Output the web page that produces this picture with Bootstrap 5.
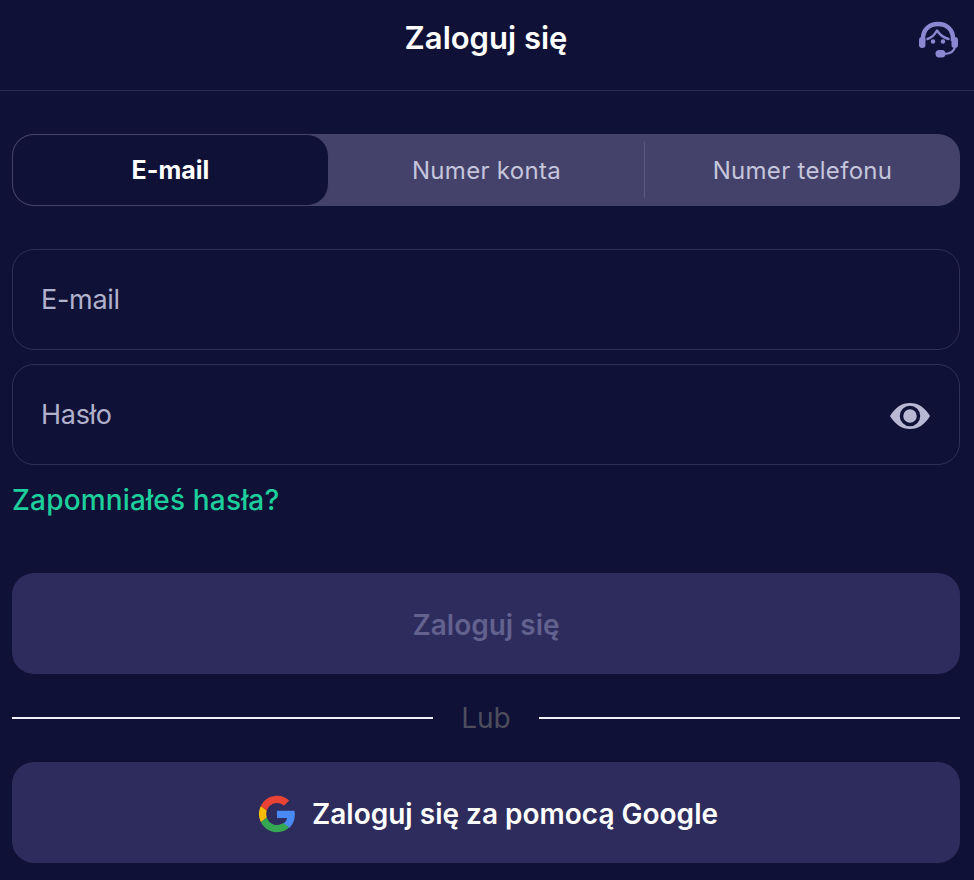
<!DOCTYPE html>
<html lang="pl">
<head>
    <meta charset="UTF-8">
    <meta name="viewport" content="width=device-width, initial-scale=1.0">
    <title>Zaloguj się</title>
    <link href="https://cdn.jsdelivr.net/npm/bootstrap@5.3.0/dist/css/bootstrap.min.css" rel="stylesheet">
    <style>
        body {
            font-family: "Inter", "Liberation Sans", sans-serif;
            background: #101136;
            color: #fff;
        }

        .top-bar {
            height: 91px;
            border-bottom: 1px solid #2b2c52;
            padding: 0 14px 14px 12px;
        }

        .top-title {
            font-size: 31px;
            font-weight: 600;
        }

        .support-btn {
            right: 14px;
            top: 20px;
            line-height: 0;
        }

        .page-body {
            padding: 43px 14px 0 12px;
        }

        .login-tabs {
            height: 72px;
            background: #44426b;
            border-radius: 22px;
        }

        .login-tab {
            flex: 1 1 0;
            padding-top: 2px;
            font-size: 24px;
            letter-spacing: .3px;
            color: #c5c5dc;
        }

        .login-tab.is-active {
            background: #101136;
            border: 1px solid #44426b;
            border-radius: 22px;
            color: #fff;
            font-size: 25px;
            font-weight: 700;
            letter-spacing: 0;
        }

        .tab-sep {
            width: 1px;
            height: 56px;
            background: #5a5980;
        }

        .field-box {
            height: 101px;
            border: 1px solid #2f3055;
            border-radius: 22px;
            padding: 2px 29px 0 28px;
            font-size: 27px;
            letter-spacing: -.3px;
            color: #b0b1cd;
        }

        .first-field {
            margin-top: -5px;
            margin-bottom: 14px;
        }

        .forgot-link {
            font-size: 28px;
            font-weight: 500;
            letter-spacing: .17px;
            color: #1ccf9c;
            line-height: 34px;
            margin-top: 18px;
            margin-bottom: 56px;
        }

        .big-btn {
            height: 101px;
            padding-top: 4px;
            border: 0;
            border-radius: 22px;
            background: #2e2c5c;
            font-size: 28px;
            font-weight: 600;
            color: #fff;
        }

        .big-btn:disabled {
            color: #63618e;
            opacity: 1;
        }

        .google-btn {
            padding: 2px 0 0 4px;
        }

        .or-row {
            height: 88px;
            font-size: 28px;
            color: #4d4d5e;
            gap: 28px;
        }

        .or-line {
            height: 2px;
            background: #f2f2f8;
        }
    </style>
</head>
<body>
    <header class="top-bar position-relative d-flex align-items-center justify-content-center">
        <div class="top-title">Zaloguj się</div>
        <a href="#" class="support-btn position-absolute">
            <svg width="42" height="40" viewBox="0 0 42 40" fill="none">
                <path d="M5 21V18.500C5 9.500 11.500 4 20 4S35 9.500 35 18.500V21" stroke="#8b88d2" stroke-width="4.500"/>
                <path d="M9.500 19C13 18 16.500 15 19 10.500C22 15 26.500 18 30.500 19" stroke="#8b88d2" stroke-width="2.500" stroke-linecap="round" stroke-linejoin="round"/>
                <rect x="1" y="17" width="6.500" height="11" rx="3.200" fill="#8b88d2"/>
                <rect x="33.500" y="17" width="6.500" height="11" rx="3.200" fill="#8b88d2"/>
                <circle cx="15" cy="21.500" r="2.200" fill="#8b88d2"/>
                <circle cx="25" cy="21.500" r="2.200" fill="#8b88d2"/>
                <path d="M37 27C36 31.500 33 33.500 27 34" stroke="#8b88d2" stroke-width="2.200"/>
                <rect x="17.500" y="30" width="10" height="7.500" rx="3.700" fill="#8b88d2"/>
            </svg>
        </a>
    </header>

    <main class="page-body">
        <div class="login-tabs d-flex align-items-center mb-5">
            <div class="login-tab is-active h-100 d-flex align-items-center justify-content-center">E-mail</div>
            <div class="login-tab d-flex align-items-center justify-content-center">Numer konta</div>
            <div class="tab-sep"></div>
            <div class="login-tab d-flex align-items-center justify-content-center">Numer telefonu</div>
        </div>

        <div class="field-box first-field d-flex align-items-center">E-mail</div>
        <div class="field-box d-flex align-items-center justify-content-between">
            <span>Hasło</span>
            <svg width="40" height="26" viewBox="0 0 40 26">
                <path d="M0 13C5 4.500 12 0 20 0S35 4.500 40 13C35 21.500 28 26 20 26S5 21.500 0 13Z" fill="#b9b8d4"/>
                <circle cx="20" cy="13" r="8.500" fill="none" stroke="#101136" stroke-width="3.500"/>
            </svg>
        </div>
        <div class="forgot-link">Zapomniałeś hasła?</div>

        <button class="big-btn w-100 d-block" disabled>Zaloguj się</button>

        <div class="or-row d-flex align-items-center">
            <div class="or-line flex-grow-1"></div>
            <span>Lub</span>
            <div class="or-line flex-grow-1"></div>
        </div>

        <button class="big-btn google-btn w-100 d-flex align-items-center justify-content-center gap-3">
            <svg width="38" height="38" viewBox="0 0 48 48">
                <path fill="#4a8af4" d="M46.500 24.500c0-1.600-.1-3.100-.4-4.500H24v9h12.700c-.6 2.900-2.200 5.400-4.700 7l7.300 5.700c4.300-4 7.200-9.800 7.200-17.200z"/>
                <path fill="#34a853" d="M24 47c6.200 0 11.400-2 15.300-5.800L32 35.500c-2 1.400-4.700 2.300-8 2.300-6 0-11.100-4-12.900-9.500l-7.500 5.800C7.400 41.800 15.100 47 24 47z"/>
                <path fill="#f9bc05" d="M11.100 28.300c-.5-1.400-.7-2.800-.7-4.300s.3-3 .7-4.300l-7.500-5.800C2.100 17 1.200 20.400 1.200 24s.9 7 2.400 10.100z"/>
                <path fill="#ea4335" d="M24 10.200c3.400 0 6.400 1.200 8.800 3.400l6.500-6.500C35.400 3.400 30.200 1 24 1 15.100 1 7.400 6.200 3.600 13.900l7.500 5.800C12.900 14.200 18 10.200 24 10.200z"/>
            </svg>
            <span>Zaloguj się za pomocą Google</span>
        </button>
    </main>

    <script src="https://cdn.jsdelivr.net/npm/bootstrap@5.3.0/dist/js/bootstrap.bundle.min.js"></script>
</body>
</html>
